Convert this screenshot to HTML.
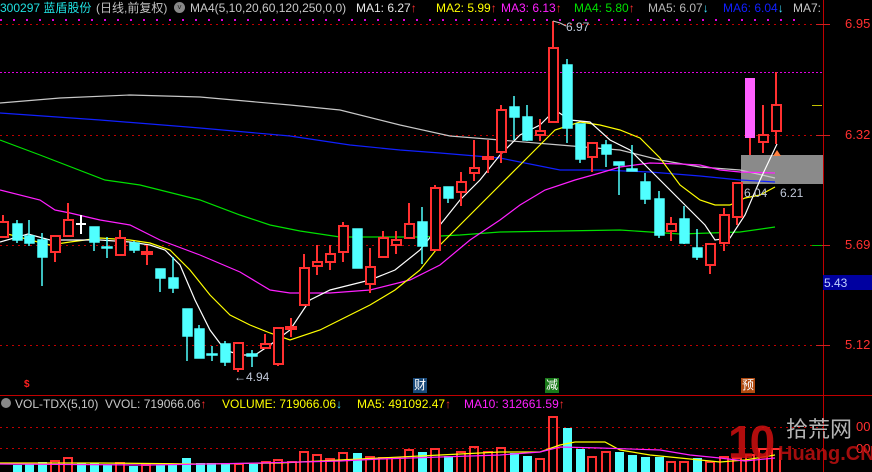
<!DOCTYPE html>
<html><head><meta charset="utf-8">
<style>
html,body{margin:0;padding:0;background:#000;width:872px;height:472px;overflow:hidden}
.t{position:absolute;font-family:"Liberation Sans","Noto Sans CJK SC",sans-serif;font-size:12px;white-space:nowrap;line-height:14px}
</style></head><body>
<div style="position:relative;width:872px;height:472px">
<svg width="872" height="472" style="position:absolute;left:0;top:0" xmlns="http://www.w3.org/2000/svg">
<g stroke="#c00000" stroke-width="1" stroke-dasharray="2,4">
<line x1="0" y1="24.5" x2="823" y2="24.5"/>
<line x1="0" y1="135.5" x2="823" y2="135.5"/>
<line x1="0" y1="245.5" x2="823" y2="245.5"/>
<line x1="0" y1="345.5" x2="823" y2="345.5"/>
<line x1="0" y1="427.5" x2="823" y2="427.5"/>
<line x1="0" y1="448.5" x2="823" y2="448.5"/>
</g>
<line x1="0" y1="72.5" x2="823" y2="72.5" stroke="#e000e0" stroke-dasharray="2,2"/>
<line x1="0" y1="20" x2="800" y2="20" stroke="#e000e0" stroke-width="2" stroke-dasharray="2,11"/>
<line x1="823.5" y1="0" x2="823.5" y2="472" stroke="#c00000"/>
<line x1="0" y1="395.5" x2="872" y2="395.5" stroke="#c00000"/>
<g stroke="#d02020"><line x1="816" y1="24.5" x2="830" y2="24.5"/><line x1="816" y1="135.5" x2="830" y2="135.5"/><line x1="816" y1="245.5" x2="830" y2="245.5"/><line x1="816" y1="345.5" x2="830" y2="345.5"/></g>
<line x1="812" y1="105.5" x2="822" y2="105.5" stroke="#c0c000"/>
<line x1="812" y1="245.5" x2="822" y2="245.5" stroke="#00c000"/>
<rect x="741" y="155" width="82" height="29" fill="#8a8a8a"/>
<g fill="none" stroke-width="1.2">
<polyline stroke="#c8c8c8" points="0,103 60,98 130,95 200,97 290,105 340,110 400,125 450,136 500,140 560,145 620,150 660,160 700,167 740,170 775,178"/>
<polyline stroke="#1020ff" points="0,113 100,120 200,128 290,136 350,145 400,150 440,153 500,158 560,170 600,170 650,172 700,176 740,180 775,182"/>
<polyline stroke="#00e000" points="0,140 40,155 105,180 140,185 200,200 240,215 270,225 300,231 340,237 380,237 420,237 460,235 500,232 560,231 620,230 680,234 740,232 775,227"/>
<polyline stroke="#ff20ff" points="0,190 40,200 55,210 70,213 100,220 130,225 160,240 200,255 240,272 270,290 290,293 330,293 370,290 410,280 440,265 470,240 500,220 520,205 545,190 575,180 600,173 620,167 650,163 680,164 700,165 720,170 740,172 775,173"/>
<polyline stroke="#ffff00" points="0,232 30,240 50,245 70,242 100,238 130,240 150,243 170,250 190,270 210,295 230,315 250,325 270,333 290,340 320,330 350,315 370,305 395,290 420,270 440,245 460,225 480,205 500,185 520,165 540,145 555,130 580,122 600,125 620,130 640,138 660,158 680,185 700,200 715,205 730,205 745,198 760,195 775,187"/>
<polyline stroke="#ffffff" points="0,242 28,234 50,240 70,240 100,240 130,242 150,245 165,250 180,265 195,300 210,330 225,350 240,355 255,355 270,345 290,330 300,315 310,300 330,290 350,285 370,280 395,270 420,250 440,225 460,200 480,180 500,155 520,135 540,125 555,110 570,120 590,122 610,140 630,150 650,170 670,190 690,210 705,225 715,240 730,238 745,215 760,180 777,144"/>
</g>
<g stroke-width="2">
<g stroke="#ff3030" fill="none">
<line x1="3" y1="215" x2="3" y2="237"/><rect x="-1" y="222" width="9" height="15" fill="#000"/>
<line x1="55" y1="236" x2="55" y2="262"/><rect x="51" y="236" width="9" height="16" fill="#000"/>
<line x1="68" y1="203" x2="68" y2="236"/><rect x="64" y="220" width="9" height="16" fill="#000"/>
<line x1="120" y1="230" x2="120" y2="255"/><rect x="116" y="238" width="9" height="17" fill="#000"/>
<line x1="147" y1="245" x2="147" y2="265"/><rect x="142" y="252" width="10" height="2" fill="#ff3030"/>
<line x1="238" y1="343" x2="238" y2="372"/><rect x="234" y="343" width="9" height="26" fill="#000"/>
<line x1="265" y1="334" x2="265" y2="348"/><rect x="261" y="344" width="9" height="4" fill="#000"/>
<line x1="278" y1="328" x2="278" y2="366"/><rect x="274" y="328" width="9" height="36" fill="#000"/>
<line x1="291" y1="318" x2="291" y2="337"/><rect x="286" y="327" width="10" height="2" fill="#ff3030"/>
<line x1="304" y1="254" x2="304" y2="305"/><rect x="300" y="268" width="9" height="37" fill="#000"/>
<line x1="317" y1="245" x2="317" y2="275"/><rect x="313" y="262" width="9" height="4" fill="#000"/>
<line x1="330" y1="245" x2="330" y2="270"/><rect x="326" y="254" width="9" height="8" fill="#000"/>
<line x1="343" y1="222" x2="343" y2="262"/><rect x="339" y="226" width="9" height="26" fill="#000"/>
<line x1="370" y1="248" x2="370" y2="293"/><rect x="366" y="267" width="9" height="17" fill="#000"/>
<line x1="383" y1="231" x2="383" y2="257"/><rect x="379" y="238" width="9" height="19" fill="#000"/>
<line x1="396" y1="231" x2="396" y2="254"/><rect x="392" y="240" width="9" height="5" fill="#000"/>
<line x1="409" y1="203" x2="409" y2="238"/><rect x="405" y="224" width="9" height="14" fill="#000"/>
<line x1="435" y1="185" x2="435" y2="250"/><rect x="431" y="188" width="9" height="62" fill="#000"/>
<line x1="461" y1="172" x2="461" y2="206"/><rect x="457" y="182" width="9" height="10" fill="#000"/>
<line x1="474" y1="140" x2="474" y2="181"/><rect x="470" y="168" width="9" height="5" fill="#000"/>
<line x1="488" y1="140" x2="488" y2="173"/><rect x="483" y="157" width="10" height="2" fill="#ff3030"/>
<line x1="501" y1="105" x2="501" y2="163"/><rect x="497" y="110" width="9" height="42" fill="#000"/>
<line x1="540" y1="119" x2="540" y2="141"/><rect x="536" y="131" width="9" height="4" fill="#000"/>
<line x1="553" y1="21" x2="553" y2="122"/><rect x="549" y="48" width="9" height="74" fill="#000"/>
<line x1="592" y1="143" x2="592" y2="172"/><rect x="588" y="143" width="9" height="14" fill="#000"/>
<line x1="671" y1="217" x2="671" y2="241"/><rect x="667" y="224" width="9" height="7" fill="#000"/>
<line x1="710" y1="244" x2="710" y2="274"/><rect x="706" y="244" width="9" height="21" fill="#000"/>
<line x1="724" y1="208" x2="724" y2="251"/><rect x="720" y="215" width="9" height="28" fill="#000"/>
<line x1="737" y1="183" x2="737" y2="225"/><rect x="733" y="183" width="9" height="34" fill="#000"/>
<line x1="750" y1="138" x2="750" y2="155"/>
<line x1="763" y1="105" x2="763" y2="153"/><rect x="759" y="135" width="9" height="7" fill="#000"/>
<line x1="776" y1="72" x2="776" y2="144"/><rect x="772" y="105" width="9" height="26" fill="#000"/>
</g>
<rect x="745" y="78" width="10" height="60" fill="#ff60ff"/>
<line x1="81" y1="215" x2="81" y2="234" stroke="#fff"/><rect x="76" y="223" width="10" height="2" fill="#fff"/>
<g stroke="#50ffff" fill="#50ffff" stroke-width="1.5">
<line x1="17" y1="220" x2="17" y2="243"/><rect x="13" y="224" width="9" height="16"/>
<line x1="29" y1="220" x2="29" y2="246"/><rect x="25" y="236" width="9" height="7"/>
<line x1="42" y1="233" x2="42" y2="286"/><rect x="38" y="240" width="9" height="17"/>
<line x1="94" y1="227" x2="94" y2="251"/><rect x="90" y="227" width="9" height="15"/>
<line x1="107" y1="237" x2="107" y2="258"/><rect x="102" y="247" width="10" height="1"/>
<line x1="134" y1="241" x2="134" y2="253"/><rect x="130" y="243" width="9" height="7"/>
<line x1="160" y1="269" x2="160" y2="292"/><rect x="156" y="269" width="9" height="9"/>
<line x1="173" y1="257" x2="173" y2="293"/><rect x="169" y="278" width="9" height="10"/>
<line x1="187" y1="309" x2="187" y2="361"/><rect x="183" y="309" width="9" height="27"/>
<line x1="199" y1="325" x2="199" y2="358"/><rect x="195" y="329" width="9" height="29"/>
<line x1="212" y1="346" x2="212" y2="361"/><rect x="207" y="354" width="10" height="1"/>
<line x1="225" y1="341" x2="225" y2="366"/><rect x="221" y="344" width="9" height="18"/>
<line x1="252" y1="350" x2="252" y2="367"/><rect x="247" y="354" width="10" height="2"/>
<line x1="357" y1="229" x2="357" y2="268"/><rect x="353" y="229" width="9" height="39"/>
<line x1="422" y1="207" x2="422" y2="264"/><rect x="418" y="222" width="9" height="24"/>
<line x1="448" y1="187" x2="448" y2="203"/><rect x="444" y="187" width="9" height="11"/>
<line x1="514" y1="96" x2="514" y2="140"/><rect x="510" y="107" width="9" height="10"/>
<line x1="527" y1="105" x2="527" y2="141"/><rect x="523" y="117" width="9" height="23"/>
<line x1="567" y1="59" x2="567" y2="143"/><rect x="563" y="65" width="9" height="63"/>
<line x1="580" y1="124" x2="580" y2="163"/><rect x="576" y="124" width="9" height="35"/>
<line x1="606" y1="140" x2="606" y2="167"/><rect x="602" y="145" width="9" height="9"/>
<line x1="619" y1="162" x2="619" y2="195"/><rect x="614" y="162" width="10" height="3"/>
<line x1="632" y1="145" x2="632" y2="171"/><rect x="627" y="169" width="10" height="2"/>
<line x1="645" y1="173" x2="645" y2="204"/><rect x="641" y="182" width="9" height="17"/>
<line x1="659" y1="191" x2="659" y2="238"/><rect x="655" y="199" width="9" height="36"/>
<line x1="684" y1="206" x2="684" y2="244"/><rect x="680" y="219" width="9" height="24"/>
<line x1="697" y1="229" x2="697" y2="260"/><rect x="693" y="248" width="9" height="9"/>
</g>
</g>
<polygon points="777,150 773,156 781,156" fill="#ff8040"/>
<polyline points="553,21 560,23 566,26" stroke="#c8c8c8" fill="none"/>
<g fill="#50ffff">
<rect x="13" y="465" width="9" height="7"/><rect x="25" y="464" width="9" height="8"/><rect x="38" y="462" width="9" height="10"/>
<rect x="77" y="463" width="9" height="9"/><rect x="90" y="463" width="9" height="9"/><rect x="103" y="465" width="9" height="7"/>
<rect x="129" y="466" width="9" height="6"/><rect x="156" y="465" width="9" height="7"/><rect x="168" y="465" width="9" height="7"/>
<rect x="182" y="458" width="9" height="14"/><rect x="196" y="463" width="9" height="9"/><rect x="207" y="463" width="9" height="9"/>
<rect x="221" y="463" width="9" height="9"/><rect x="249" y="464" width="9" height="8"/><rect x="353" y="453" width="9" height="19"/>
<rect x="418" y="452" width="9" height="20"/><rect x="444" y="456" width="9" height="16"/><rect x="510" y="453" width="9" height="19"/>
<rect x="523" y="456" width="9" height="16"/><rect x="563" y="428" width="9" height="44"/><rect x="576" y="449" width="9" height="23"/>
<rect x="615" y="452" width="9" height="20"/><rect x="628" y="455" width="9" height="17"/><rect x="641" y="457" width="9" height="15"/>
<rect x="655" y="457" width="9" height="15"/><rect x="693" y="458" width="9" height="14"/>
</g>
<g fill="none" stroke="#ff3030" stroke-width="2">
<rect x="51" y="461" width="8" height="12"/><rect x="64" y="458" width="8" height="15"/><rect x="116" y="463" width="8" height="10"/>
<rect x="142" y="465" width="8" height="8"/><rect x="235" y="464" width="8" height="9"/><rect x="262" y="462" width="8" height="11"/>
<rect x="274" y="460" width="8" height="13"/><rect x="288" y="462" width="8" height="11"/><rect x="300" y="452" width="8" height="21"/>
<rect x="313" y="455" width="8" height="18"/><rect x="326" y="459" width="8" height="14"/><rect x="339" y="453" width="8" height="20"/>
<rect x="366" y="457" width="8" height="16"/><rect x="379" y="458" width="8" height="15"/><rect x="392" y="458" width="8" height="15"/>
<rect x="405" y="450" width="8" height="23"/><rect x="431" y="449" width="8" height="24"/><rect x="457" y="452" width="8" height="21"/>
<rect x="470" y="447" width="8" height="26"/><rect x="484" y="452" width="8" height="21"/><rect x="497" y="448" width="8" height="25"/>
<rect x="536" y="459" width="8" height="14"/><rect x="549" y="417" width="8" height="56"/><rect x="588" y="457" width="8" height="16"/>
<rect x="602" y="452" width="8" height="21"/><rect x="667" y="462" width="8" height="11"/><rect x="680" y="462" width="8" height="11"/>
<rect x="706" y="462" width="8" height="11"/><rect x="720" y="457" width="8" height="16"/><rect x="733" y="458" width="8" height="15"/>
<rect x="746" y="455" width="8" height="18"/><rect x="759" y="449" width="8" height="24"/><rect x="772" y="449" width="8" height="24"/>
</g>
<polyline fill="none" stroke="#ffff00" stroke-width="1.2" points="0,463 100,463 200,464 280,463 340,460 380,458 440,455 500,452 540,452 560,445 575,442 605,442 620,450 650,455 700,460 720,462 745,460 775,455"/>
<polyline fill="none" stroke="#ff20ff" stroke-width="1.2" points="0,464 150,465 260,463 340,461 380,459 440,457 500,455 540,452 560,447 600,448 660,450 690,455 720,458 745,461 775,458"/>
<rect x="413" y="378" width="14" height="15" fill="#1a4a7a"/>
<rect x="545" y="378" width="14" height="15" fill="#1a7a1a"/>
<rect x="741" y="378" width="14" height="15" fill="#b04a10"/>
<rect x="823" y="275" width="49" height="15" fill="#0000a0"/>
</svg>
<div class="t" style="left:0;top:1px;color:#20e0e0">300297 蓝盾股份</div>
<div class="t" style="left:96px;top:1px;color:#c0c0c0">(日线,前复权)</div>
<div class="t" style="left:174px;top:2px;width:11px;height:11px;border-radius:6px;background:#888;color:#222;font-size:8px;line-height:11px;text-align:center">˅</div>
<div class="t" style="left:190px;top:1px;color:#c8c8c8">MA4(5,10,20,60,120,250,0,0)</div>
<div class="t" style="left:356px;top:1px;color:#e8e8e8">MA1: 6.27<span style="color:#ff3030">↑</span></div>
<div class="t" style="left:436px;top:1px;color:#ffff00">MA2: 5.99<span style="color:#ff3030">↑</span></div>
<div class="t" style="left:501px;top:1px;color:#ff20ff">MA3: 6.13<span style="color:#ff3030">↑</span></div>
<div class="t" style="left:574px;top:1px;color:#00e000">MA4: 5.80<span style="color:#ff3030">↑</span></div>
<div class="t" style="left:648px;top:1px;color:#b8b8b8">MA5: 6.07<span style="color:#40e0ff">↓</span></div>
<div class="t" style="left:723px;top:1px;color:#1020ff">MA6: 6.04<span style="color:#40e0ff">↓</span></div>
<div class="t" style="left:793px;top:1px;color:#c8c8c8">MA7:</div>
<div class="t" style="left:845px;top:17px;color:#ff3030;font-size:13px">6.95</div>
<div class="t" style="left:845px;top:128px;color:#ff3030;font-size:13px">6.32</div>
<div class="t" style="left:845px;top:238px;color:#ff3030;font-size:13px">5.69</div>
<div class="t" style="left:845px;top:338px;color:#ff3030;font-size:13px">5.12</div>
<div class="t" style="left:824px;top:276px;color:#c0d0ff;font-size:12px">5.43</div>
<div class="t" style="left:566px;top:20px;color:#c0c8d8">6.97</div>
<div class="t" style="left:234px;top:370px;color:#c0c8d8">←4.94</div>
<div class="t" style="left:744px;top:186px;color:#c0c8d8">6.04</div>
<div class="t" style="left:780px;top:186px;color:#c0c8d8">6.21</div>
<div class="t" style="left:24px;top:378px;color:#ff2020;font-size:10px;font-weight:bold">$</div>
<div class="t" style="left:414px;top:378px;color:#fff">财</div>
<div class="t" style="left:546px;top:378px;color:#fff">减</div>
<div class="t" style="left:742px;top:378px;color:#fff">预</div>
<div class="t" style="left:1px;top:398px;width:10px;height:10px;border-radius:5px;background:#888"></div>
<div class="t" style="left:15px;top:397px;color:#c8c8c8">VOL-TDX(5,10) &nbsp;VVOL: 719066.06<span style="color:#ff3030">↑</span></div>
<div class="t" style="left:222px;top:397px;color:#ffff00">VOLUME: 719066.06<span style="color:#40e0ff">↓</span></div>
<div class="t" style="left:357px;top:397px;color:#ffff00">MA5: 491092.47<span style="color:#ff3030">↑</span></div>
<div class="t" style="left:464px;top:397px;color:#ff20ff">MA10: 312661.59<span style="color:#ff3030">↑</span></div>
<div class="t" style="left:856px;top:420px;color:#ff3030;font-size:13px">00</div>
<div class="t" style="left:856px;top:442px;color:#ff3030;font-size:13px">00</div>
<div class="t" style="left:728px;top:418px;color:#d01010;font-size:46px;line-height:48px;font-weight:bold;opacity:0.85;letter-spacing:-4px">10</div>
<div class="t" style="left:786px;top:418px;color:#c8c8c8;font-size:22px;line-height:24px;opacity:0.9">拾荒网</div>
<div class="t" style="left:778px;top:443px;color:#c01010;font-size:20px;line-height:22px;font-weight:bold;opacity:0.85">Huang.CN</div>
</div>
</body></html>
